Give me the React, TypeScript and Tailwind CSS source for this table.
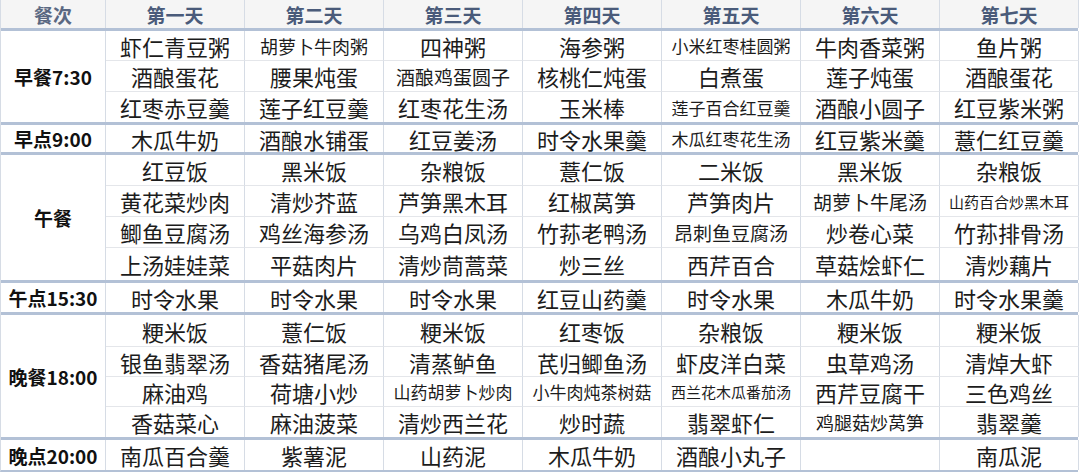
type Cell = string | { t: string; c: string }

type Section = {
  label: string
  rowsClass: string
  spanClass: string
  rows: Cell[][]
}

const days = ['第一天', '第二天', '第三天', '第四天', '第五天', '第六天', '第七天']

const sections: Section[] = [
  {
    label: '早餐7:30',
    rowsClass: 'grid-rows-[30px_31px_30px]',
    spanClass: 'row-span-3',
    rows: [
      ['虾仁青豆粥', { t: '胡萝卜牛肉粥', c: 'text-[18px]' }, '四神粥', '海参粥', { t: '小米红枣桂圆粥', c: 'text-[17px]' }, '牛肉香菜粥', '鱼片粥'],
      ['酒酿蛋花', '腰果炖蛋', { t: '酒酿鸡蛋圆子', c: 'text-[19px]' }, '核桃仁炖蛋', '白煮蛋', '莲子炖蛋', '酒酿蛋花'],
      ['红枣赤豆羹', '莲子红豆羹', '红枣花生汤', '玉米棒', { t: '莲子百合红豆羹', c: 'text-[17px]' }, '酒酿小圆子', '红豆紫米粥'],
    ],
  },
  {
    label: '早点9:00',
    rowsClass: 'grid-rows-[27px]',
    spanClass: 'row-span-1',
    rows: [['木瓜牛奶', '酒酿水铺蛋', '红豆姜汤', '时令水果羹', { t: '木瓜红枣花生汤', c: 'text-[17px]' }, '红豆紫米羹', '薏仁红豆羹']],
  },
  {
    label: '午餐',
    rowsClass: 'grid-rows-[31px_31px_31px_32px]',
    spanClass: 'row-span-4',
    rows: [
      ['红豆饭', '黑米饭', '杂粮饭', '薏仁饭', '二米饭', '黑米饭', '杂粮饭'],
      ['黄花菜炒肉', '清炒芥蓝', '芦笋黑木耳', '红椒莴笋', '芦笋肉片', { t: '胡萝卜牛尾汤', c: 'text-[19px]' }, { t: '山药百合炒黑木耳', c: 'text-[15px]' }],
      ['鲫鱼豆腐汤', '鸡丝海参汤', '乌鸡白凤汤', '竹荪老鸭汤', { t: '昂刺鱼豆腐汤', c: 'text-[19px]' }, '炒卷心菜', '竹荪排骨汤'],
      ['上汤娃娃菜', '平菇肉片', '清炒茼蒿菜', '炒三丝', '西芹百合', '草菇烩虾仁', '清炒藕片'],
    ],
  },
  {
    label: '午点15:30',
    rowsClass: 'grid-rows-[29px]',
    spanClass: 'row-span-1',
    rows: [['时令水果', '时令水果', '时令水果', '红豆山药羹', '时令水果', '木瓜牛奶', '时令水果羹']],
  },
  {
    label: '晚餐18:00',
    rowsClass: 'grid-rows-[32px_30px_30px_30px]',
    spanClass: 'row-span-4',
    rows: [
      ['粳米饭', '薏仁饭', '粳米饭', '红枣饭', '杂粮饭', '粳米饭', '粳米饭'],
      ['银鱼翡翠汤', '香菇猪尾汤', '清蒸鲈鱼', '芪归鲫鱼汤', '虾皮洋白菜', '虫草鸡汤', '清焯大虾'],
      ['麻油鸡', '荷塘小炒', { t: '山药胡萝卜炒肉', c: 'text-[17px]' }, { t: '小牛肉炖茶树菇', c: 'text-[17px]' }, { t: '西兰花木瓜番茄汤', c: 'text-[15px]' }, '西芹豆腐干', '三色鸡丝'],
      ['香菇菜心', '麻油菠菜', '清炒西兰花', '炒时蔬', '翡翠虾仁', { t: '鸡腿菇炒莴笋', c: 'text-[18px]' }, '翡翠羹'],
    ],
  },
  {
    label: '晚点20:00',
    rowsClass: 'grid-rows-[30px]',
    spanClass: 'row-span-1',
    rows: [['南瓜百合羹', '紫薯泥', '山药泥', '木瓜牛奶', '酒酿小丸子', '', '南瓜泥']],
  },
]

const font = { fontFamily: '"Noto Sans CJK SC", "Microsoft YaHei", sans-serif' }

export default function App() {
  return (
    <div className="w-[1080px] h-[473px] bg-white overflow-hidden" style={font}>
      <div className="w-[1078px] border-l border-[#d6dce5] border-b-2 border-b-[#b3c1d6]">
        <div className="grid grid-cols-[105px_repeat(7,139px)] h-[28px] bg-[#f5f5f5]">
          <div className="flex items-center justify-center border-r border-[#d6dce5] text-[19px] font-bold text-[#5a6882] leading-none">
            餐次
          </div>
          {days.map((d) => (
            <div key={d} className="flex items-center justify-center border-r border-[#d6dce5] text-[19px] font-bold text-[#4a5b7a] leading-none">
              {d}
            </div>
          ))}
        </div>

        {sections.map((s) => (
          <div key={s.label} className={`grid grid-cols-[105px_repeat(7,139px)] border-t-[3px] border-[#b3c1d6] ${s.rowsClass}`}>
            <div className={`${s.spanClass} flex items-center justify-center border-r border-[#d6dce5] text-[19px] font-bold text-[#111] leading-none`}>
              {s.label}
            </div>
            {s.rows.map((row, ri) =>
              row.map((cell, ci) => {
                const text = typeof cell === 'string' ? cell : cell.t
                const size = typeof cell === 'string' ? 'text-[22px]' : cell.c
                const last = ri === s.rows.length - 1
                return (
                  <div
                    key={`${ri}-${ci}`}
                    className={`flex items-center justify-center border-r border-[#d6dce5] ${last ? '' : 'border-b border-b-[#e4e6ea]'} ${size} text-[#1c1c1c] leading-none whitespace-nowrap`}
                  >
                    {text}
                  </div>
                )
              })
            )}
          </div>
        ))}
      </div>
    </div>
  )
}
